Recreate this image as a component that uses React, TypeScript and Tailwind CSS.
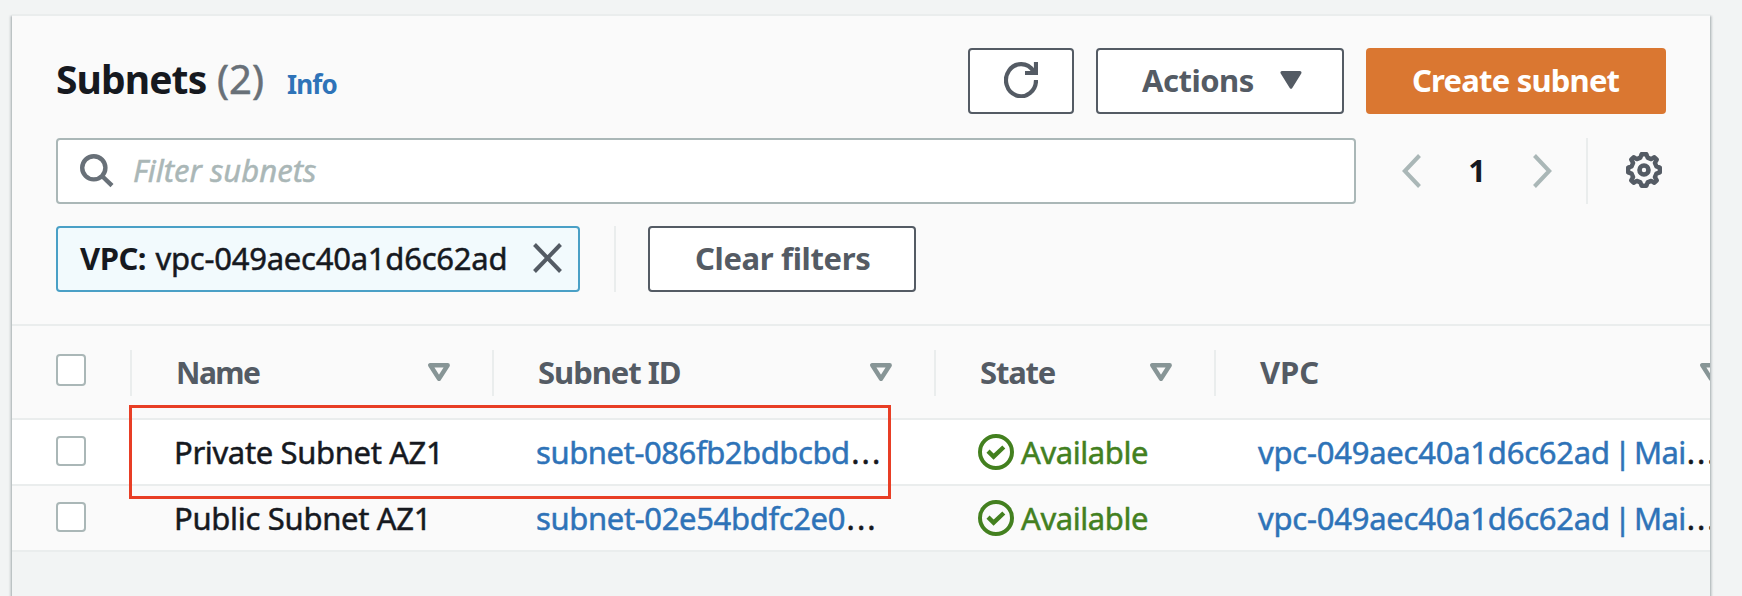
import React from "react";

const COLUMNS = "grid grid-cols-[118px_362px_442px_280px_520px] w-[1722px]";

const rows = [
  { name: "Private Subnet AZ1", subnet: "subnet-086fb2bdbcbd", nameTracking: "tracking-[-0.36px]", idTracking: "tracking-[-0.42px]", row: "bg-white border-[#eaeded]" },
  { name: "Public Subnet AZ1", subnet: "subnet-02e54bdfc2e0", nameTracking: "tracking-[-0.3px]", idTracking: "tracking-[-0.36px]", row: "bg-[#fafafa] border-[#eaeded]" },
];

function SearchIcon() {
  return (
    <svg className="h-9 w-9 shrink-0" viewBox="0 0 36 36" fill="none" stroke="#687078" strokeWidth="4.4">
      <circle cx="14.8" cy="14.8" r="11.6" />
      <path d="M23 23L33 32.6" />
    </svg>
  );
}

function RefreshIcon() {
  return (
    <svg className="h-9 w-[34px]" viewBox="0 0 34 36" fill="none" stroke="#545b64" strokeWidth="4.2">
      <path d="M32 18A15 16 0 1 1 29.4 9.2L30.5 11" />
      <path d="M32 0V11H21" />
    </svg>
  );
}

function CaretDown() {
  return (
    <svg className="h-[18px] w-[22px]" viewBox="0 0 22 18" fill="#545b64" stroke="#545b64" strokeWidth="3" strokeLinejoin="round">
      <path d="M2 1.6H20L11 16.3Z" />
    </svg>
  );
}

function SortIcon() {
  return (
    <svg className="h-[18px] w-[22px]" viewBox="0 0 22 18" fill="none" stroke="#879596" strokeWidth="4.4" strokeLinejoin="round">
      <path d="M2.3 2.2H19.7L11 15.8Z" />
    </svg>
  );
}

function Chevron({ d }: { d: string }) {
  return (
    <svg className="h-[34px] w-[19px]" viewBox="0 0 19 34" fill="none" stroke="#aab7b7" strokeWidth="4">
      <path d={d} />
    </svg>
  );
}

function GearIcon() {
  return (
    <svg className="h-9 w-9" viewBox="0 0 36 36" fill="none" stroke="#545b64" strokeWidth="4.4" strokeLinejoin="round">
      <path d="M15.6 2.2H20.4L21.6 5.6L25.2 7.1L28.4 5.2L30.8 7.6L28.9 10.8L30.4 14.4L33.8 15.6V20.4L30.4 21.6L28.9 25.2L30.8 28.4L28.4 30.8L25.2 28.9L21.6 30.4L20.4 33.8H15.6L14.4 30.4L10.8 28.9L7.6 30.8L5.2 28.4L7.1 25.2L5.6 21.6L2.2 20.4V15.6L5.6 14.4L7.1 10.8L5.2 7.6L7.6 5.2L10.8 7.1L14.4 5.6Z" />
      <circle cx="18" cy="18" r="4.5" strokeWidth="4.6" />
    </svg>
  );
}

function CheckCircle() {
  return (
    <svg className="h-9 w-9 shrink-0" viewBox="0 0 36 36" fill="none" stroke="#43801f" strokeWidth="4">
      <circle cx="18" cy="18" r="16" />
      <path d="M10 17.2L15.6 22.6L25.8 13" strokeWidth="4.4" />
    </svg>
  );
}

function Checkbox({ className }: { className: string }) {
  return <span className={`block w-[30px] rounded-[4px] border-2 border-[#aab7b7] bg-white ${className}`} />;
}

function HeaderCell({ label, labelClass, className }: { label: string; labelClass: string; className: string }) {
  return (
    <div className={`flex h-[46px] items-start justify-between border-l-2 border-[#eaeded] ${className}`}>
      <span className={`leading-[45px] ${labelClass}`}>{label}</span>
      <span className="pt-[13px]">
        <SortIcon />
      </span>
    </div>
  );
}

export default function App() {
  return (
    <div className="flex h-[596px] w-[1742px] overflow-hidden bg-[#f2f4f4] pt-[14px] pl-3 font-['Noto_Sans','Open_Sans',sans-serif] text-[31px] whitespace-nowrap text-[#16191f]">
      <main className="relative h-[620px] w-[1698px] shrink-0 border-t-2 border-[#eaeded] shadow-[0_2px_2px_rgba(0,28,36,0.3),2px_2px_2px_rgba(0,28,36,0.15),-2px_2px_2px_rgba(0,28,36,0.15)]">
        <div className="h-full overflow-hidden bg-[#f2f4f4]">
          <header className="h-[310px] border-b-2 border-[#eaeded] bg-[#fafafa] pt-8 pl-11">
            <div className="flex h-[66px] items-start">
              <h1 className="flex w-[912px] items-baseline pt-[2px] text-[40px] leading-[58px]">
                <span className="w-[161px] text-[39px] font-bold tracking-[-0.9px]">Subnets</span>
                <span className="w-[70px] text-[#687078] [-webkit-text-stroke:0.5px_#687078]">(2)</span>
                <a className="text-[26px] font-bold tracking-[-0.85px] text-[#2e73b8]">Info</a>
              </h1>
              <div className="flex gap-[22px]">
                <button className="flex h-[66px] w-[106px] items-start justify-center rounded-[4px] border-2 border-[#545b64] bg-white pt-3">
                  <RefreshIcon />
                </button>
                <button className="flex h-[66px] w-[248px] items-start rounded-[4px] border-2 border-[#545b64] bg-white pl-[44px] font-bold text-[#545b64]">
                  <span className="w-[138px] text-left leading-[60px] tracking-[-0.5px]">Actions</span>
                  <span className="pt-[21px]">
                    <CaretDown />
                  </span>
                </button>
                <button className="flex h-[66px] w-[300px] items-start rounded-[4px] bg-[#da7731] pl-[46px] leading-[64px] font-bold tracking-[-0.8px] text-white">Create subnet</button>
              </div>
            </div>

            <div className="mt-6 flex h-[66px]">
              <div className="flex w-[1300px] items-start rounded-[4px] border-2 border-[#aab7b7] bg-white pl-[21px]">
                <span className="w-[54px] pt-[13px]">
                  <SearchIcon />
                </span>
                <span className="leading-[61px] text-[#aab7b7] italic [-webkit-text-stroke:0.5px_#aab7b7]">Filter subnets</span>
              </div>
              <div className="flex w-[230px] items-center pl-[46px]">
                <Chevron d="M17.5 1.5L2.8 17L17.5 32.5" />
                <span className="w-[112px] pb-[2px] text-center leading-[60px] font-bold">1</span>
                <Chevron d="M1.5 1.5L16.2 17L1.5 32.5" />
              </div>
              <div className="flex items-center border-l-2 border-[#eaeded] pl-[38px]">
                <span className="-mt-[2px]">
                  <GearIcon />
                </span>
              </div>
            </div>

            <div className="mt-[22px] flex h-[66px]">
              <div className="flex w-[524px] items-start rounded-[4px] border-2 border-[#4aa0c6] bg-[#f2fafd] pl-[22px] leading-[60px]">
                <span className="w-[75.5px] font-bold tracking-[-0.5px]">VPC:</span>
                <span className="w-[377px] tracking-[-0.24px] [-webkit-text-stroke:0.5px_#16191f]">vpc-049aec40a1d6c62ad</span>
                <svg className="mt-[15px] h-[30px] w-[29px]" viewBox="0 0 29 30" fill="none" stroke="#545b64" strokeWidth="4">
                  <path d="M1.5 1.5L27.5 28.5M27.5 1.5L1.5 28.5" />
                </svg>
              </div>
              <div className="ml-[34px] w-[34px] border-l-2 border-[#eaeded]" />
              <button className="flex h-[66px] w-[268px] items-start rounded-[4px] border-2 border-[#545b64] bg-white pl-[45px] leading-[60px] font-bold tracking-[-0.35px] text-[#545b64]">Clear filters</button>
            </div>
          </header>

          <div className={`${COLUMNS} h-[94px] border-b-2 border-[#eaeded] bg-[#fafafa] pt-6 font-bold text-[#545b64]`}>
            <div className="pt-1 pl-11">
              <Checkbox className="h-8" />
            </div>
            <HeaderCell label="Name" className="pl-[44px] pr-[42px]" labelClass="text-[30px] tracking-[-1.5px]" />
            <HeaderCell label="Subnet ID" className="pl-[44px] pr-[42px]" labelClass="tracking-[-1.05px]" />
            <HeaderCell label="State" className="pl-[44px] pr-[42px]" labelClass="tracking-[-1.2px]" />
            <HeaderCell label="VPC" className="pl-[44px] pr-3" labelClass="tracking-[-0.1px]" />
          </div>

          {rows.map((r) => (
            <div key={r.name} className={`${COLUMNS} h-[66px] items-start border-b-2 leading-[64px] [-webkit-text-stroke:0.5px_currentColor] ${r.row}`}>
              <div className="pt-4 pl-11">
                <Checkbox className="h-[30px]" />
              </div>
              <div className={`pl-[44px] ${r.nameTracking}`}>{r.name}</div>
              <div className="flex pl-[44px]">
                <a className={`text-[#2e73b8] [-webkit-text-stroke:0.5px_#2e73b8] ${r.idTracking}`}>{r.subnet}</a>
                <span className="pl-[1.5px] tracking-[2px]">...</span>
              </div>
              <div className="flex items-start gap-[7px] pl-[44px] text-[#43801f]">
                <span className="pt-[14px]">
                  <CheckCircle />
                </span>
                <span className="tracking-[-0.42px] [-webkit-text-stroke:0.5px_#43801f]">Available</span>
              </div>
              <div className="flex pl-[44px]">
                <a className="tracking-[-0.24px] text-[#2e73b8] [-webkit-text-stroke:0.5px_#2e73b8]">
                  vpc-049aec40a1d6c62ad<span className="tracking-[-3.8px]"> </span>
                  <span className="tracking-[-4.6px]">|</span>
                  <span className="tracking-[-0.6px]"> Mai</span>
                </a>
                <span className="pl-px tracking-[2px]">...</span>
              </div>
            </div>
          ))}
        </div>
        <div className="absolute top-[389px] left-[117px] h-[94px] w-[762px] border-[3px] border-[#e83e25]" />
      </main>
    </div>
  );
}
